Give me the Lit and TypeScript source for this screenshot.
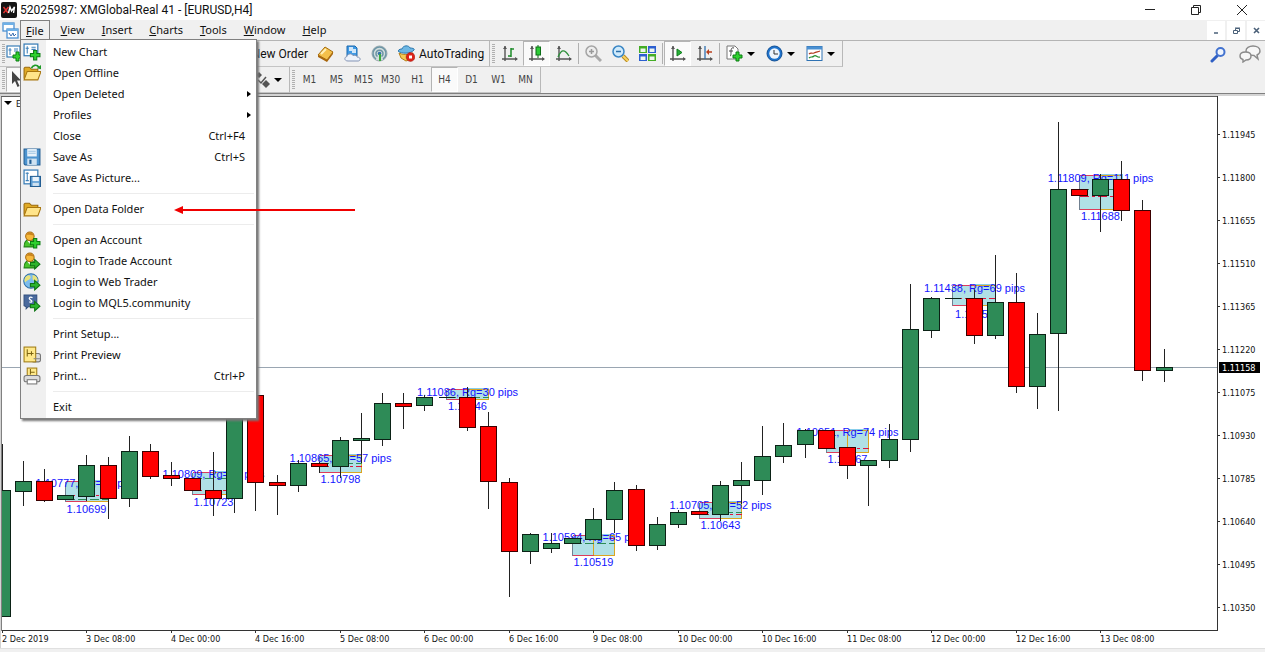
import { LitElement, html, svg, css, nothing, TemplateResult } from "lit";
import { customElement } from "lit/decorators.js";
import { classMap } from "lit/directives/class-map.js";

const plus = (x: number, y: number) => svg`<path transform="translate(${x} ${y})" d="M3 0h3v3h3v3h-3v3h-3v-3h-3v-3h3z" fill="#2fd02f" stroke="#0b7d12" stroke-width="1"/>`;
const arrow = (x: number, y: number) => svg`<path transform="translate(${x} ${y})" d="M0 3h4v-3l5 4.500-5 4.500v-3h-4z" fill="#2cb52c" stroke="#0f7414" stroke-width="1"/>`;
const axes = svg`<path d="M4 1v15M1 14h15" stroke="#555" stroke-width="1.400" fill="none"/><path d="M2 4l2-3 2 3zM14 12l3 2-3 2z" fill="#555"/>`;
const person = svg`<path d="M1 15c0-5 2-7 5.500-7s5.500 2 5.500 7z" fill="#49c52d" stroke="#24821a"/><path d="M4 9l2.500 3 2.500-3z" fill="#fff"/><circle cx="6.500" cy="5" r="4" fill="#f6b93c" stroke="#a76b12"/><path d="M3 4c1-3 6-3 7 0-2 0-5-1-7 0z" fill="#c9821c"/>`;
const folder = svg`<path d="M1 14V4l1-1h4l2 2h6v3" fill="#e0aa25" stroke="#9a6a0c"/><path d="M1 15l3-8h13l-3 8z" fill="#ffe48a" stroke="#a8760f"/>`;
const chartSheet = svg`<rect x="1" y="1" width="13" height="11" fill="#fff" stroke="#3b7fb8" stroke-width="1.200"/><path d="M4 3v7M2.500 5h3M8 4h4M8 6h4" stroke="#3b7fb8"/>`;

const art: Record<string, TemplateResult> = {
  newChart: svg`${chartSheet}${plus(7, 7)}`,
  offline: svg`${folder}<path d="M8 4c1-3 5-4 7-1" fill="none" stroke="#1e9a26" stroke-width="1.600"/><path d="M13 4l4 1V1z" fill="#1e9a26"/>`,
  folder,
  save: svg`<path d="M1 1h15v15H2l-1-1z" fill="#4d94cf" stroke="#235e93"/><rect x="4" y="1" width="9" height="7" fill="#e9f3fb"/><path d="M5 3h7M5 5h7" stroke="#9cc3e2"/><rect x="4" y="10" width="9" height="6" fill="#cfe2f1"/><rect x="6" y="11" width="2" height="4" fill="#235e93"/>`,
  savePic: svg`<rect x="1" y="1" width="13" height="13" fill="#fff" stroke="#3b7fb8" stroke-width="1.200"/><path d="M4 3v8M2.500 4h3M2.500 11h3" stroke="#3b7fb8"/><rect x="7" y="7" width="9.500" height="9.500" fill="#5a9bd2" stroke="#235e93"/><rect x="9" y="7.500" width="6" height="4" fill="#e9f3fb"/><rect x="9" y="13" width="6" height="3" fill="#cfe2f1"/>`,
  account: svg`${person}${plus(7, 7)}`,
  trade: svg`${person}${arrow(7, 7)}`,
  web: svg`<circle cx="7.500" cy="7.500" r="6.800" fill="#7cbcee" stroke="#2b6ea8"/><path d="M3 3c3-2 5 0 4 2s-4 2-5 4c-1-2-1-4 1-6zM9 2c3 0 5 3 5 5l-3 1-2-2z" fill="#e8e27c"/>${arrow(7, 7)}`,
  mql: svg`<path d="M1 1h12v9l-2 2H5l-2 2v-2l-2-1z" fill="#4a6a9e" stroke="#33507f"/><path d="M9 3.500c-3-1.500-4 1-2 2s2 3-1 2" fill="none" stroke="#fff" stroke-width="1.200"/>${arrow(7, 7)}`,
  preview: svg`<rect x="8" y="7" width="8.500" height="8" rx="2" fill="#ddd" stroke="#777"/><rect x="1" y="1" width="11" height="14" fill="#ffe98a" stroke="#a07c14"/><path d="M4 3v7M4 7h6M8 5v4" stroke="#7d6410"/><path d="M10 12h6" stroke="#888"/>`,
  print: svg`<rect x="4" y="1" width="9" height="9" fill="#ffe98a" stroke="#a07c14"/><path d="M7 2v5M7 5h4" stroke="#7d6410"/><rect x="1" y="8" width="15" height="6" rx="2" fill="#dcdcdc" stroke="#777"/><rect x="4" y="12" width="9" height="4" fill="#fff" stroke="#777"/>`,
  book: svg`<path d="M1 10l7-8 8 5-6 8z" fill="#f4c04a" stroke="#a56c0b"/><path d="M1 10v2l9 5 6-8v-2l-6 8z" fill="#a8660c"/><path d="M4 9l5-5" stroke="#fff0b8" stroke-width="2"/>`,
  cloud: svg`<path d="M3 1h8l2 2v8H3z" fill="#3f9be6" stroke="#1c69ad"/><path d="M5 3h4M5 5h7M8 7h4" stroke="#fff" stroke-width="1.400"/><path d="M4 16c-4 0-4-4-1-4.500 0-3 5-3.500 6-1 3-1 4 .5 4 1.500 4 0 4 4 1 4z" fill="#edf2fa" stroke="#8394b5"/>`,
  signal: svg`<circle cx="8.500" cy="8.500" r="7.500" fill="#d3dedd" stroke="#9aa9ae"/><path d="M5 14a6.500 6.500 0 1 1 7 0M6.500 11.500a3.500 3.500 0 1 1 4 0" fill="none" stroke="#6b94a5" stroke-width="1.500"/><circle cx="8.500" cy="8.500" r="1.800" fill="#3472a6"/><path d="M8 9h2v7h-2z" fill="#3bab3f"/>`,
  auto: svg`<path d="M1 8c3 2 10 2 14 0l-2 6-5 2-5-3z" fill="#f5ca54" stroke="#b58017"/><path d="M0 6c1-2 3-2 4-2 1-4 7-4 8-1 3 0 5 1 4 2-3 4-13 4-16 1z" fill="#6db7e4" stroke="#2d79ae"/><circle cx="12.500" cy="12" r="4.400" fill="#dd2318" stroke="#9c120b" stroke-width="0.500"/><rect x="11" y="10.500" width="3" height="3" fill="#fff"/>`,
  bars: svg`${axes}<path d="M10 3v9M10 4h3M7 11h3" stroke="#1c8a28" stroke-width="1.500"/>`,
  candles: svg`${axes}<path d="M10 0v13" stroke="#0d6f17"/><rect x="8" y="2" width="4.500" height="8" fill="#2ccb36" stroke="#0d6f17"/>`,
  line: svg`${axes}<path d="M3 12c3-7 6-9 11-1" fill="none" stroke="#2d8f3a" stroke-width="1.300"/>`,
  zoomIn: svg`<path d="M10 10l6 6" stroke="#aaa" stroke-width="3"/><circle cx="6.500" cy="6.500" r="5.500" fill="#eee" stroke="#a5a5a5" stroke-width="1.500"/><path d="M4 6.500h5M6.500 4v5" stroke="#999" stroke-width="1.500"/>`,
  zoomOut: svg`<path d="M11 11l5 5" stroke="#b98a1d" stroke-width="4"/><path d="M11 11l5 5" stroke="#f6d262" stroke-width="2"/><circle cx="6.500" cy="6.500" r="5.500" fill="#cfeafb" stroke="#3a86c4" stroke-width="1.500"/><path d="M4 6.500h5" stroke="#2b6ea8" stroke-width="1.500"/>`,
  tile: svg`<path d="M0 1h8v7H0zM9 9h8v7H9z" fill="#44ad25"/><path d="M9 1h8v7H9zM0 9h8v7H0z" fill="#2c5fd0"/><path d="M1.500 3.500h5v3.500h-5zM10.500 3.500h5v3.500h-5zM1.500 11.500h5v3.500h-5zM10.500 11.500h5v3.500h-5z" fill="#eef6ee"/>`,
  scroll: svg`${axes}<path d="M8 4v7l5-3.500z" fill="#27b036" stroke="#0f7f1c"/>`,
  shift: svg`${axes}<path d="M9 1v13" stroke="#2f6fae" stroke-width="1.300"/><path d="M16 7h-5" stroke="#b8401e" stroke-width="1.500"/><path d="M13 4l-3 3 3 3z" fill="#b8401e"/>`,
  indicator: svg`<path d="M1 1h8l3 3v10H1z" fill="#fff" stroke="#777"/><path d="M8 3c-3-1-3 2-3 4s0 4-1 4M3 6h4" fill="none" stroke="#444"/>${plus(7, 7)}`,
  clock: svg`<circle cx="8.500" cy="8.500" r="7.500" fill="#1e73cd" stroke="#114f94"/><circle cx="8.500" cy="8.500" r="5.200" fill="#eef5fc"/><path d="M8 5v4h4" fill="none" stroke="#333"/>`,
  template: svg`<rect x="1" y="1.500" width="15" height="14" fill="#fff" stroke="#2f72b3"/><path d="M1 3h15" stroke="#4a90d2" stroke-width="3"/><path d="M3 9c2-2 3 0 5-1s3-1 6-2" fill="none" stroke="#b23a1e" stroke-width="1.200"/><path d="M3 13c2-2 3 0 5-2s3 2 6 1" fill="none" stroke="#238c2e" stroke-width="1.200"/>`,
  cursor: svg`<path d="M5 0v13l3-3 2.500 6 2-1-2.500-5.500h4z" fill="#444"/>`,
  shapes: svg`<path d="M6 1l3 3-3 3-3-3zM13 9l4 4-4 4-4-4z" fill="#555"/><path d="M5 9l3 3 5-6" fill="none" stroke="#555" stroke-width="1.500"/>`,
  mdi: svg`<rect x="1" y="1" width="11" height="8" fill="#fff" stroke="#4a90d2" stroke-width="1.300"/><path d="M1 2h11" stroke="#6fb0e6" stroke-width="2"/><rect x="5" y="7" width="11" height="9" fill="#fff" stroke="#4a90d2" stroke-width="1.300"/><path d="M5 8h11" stroke="#6fb0e6" stroke-width="2"/><path d="M7 11l2 3 2-3 1 3 2-2" fill="none" stroke="#3c6fb0"/>`,
  find: svg`<path d="M7 10l-5 5" stroke="#2f5fc4" stroke-width="3" stroke-linecap="round"/><circle cx="10.500" cy="6" r="4" fill="#eef4fd" stroke="#4272cf" stroke-width="2"/>`,
};

const icon = (name: string, size = 17) =>
  html`<svg class="icon" width=${size} height=${size} viewBox="0 0 17 17" aria-hidden="true">${art[name]}</svg>`;

type MenuItem = { label: string; icon?: string; keys?: string; sub?: boolean } | null;
const fileMenu: MenuItem[] = [
  { label: "New Chart", icon: "newChart" },
  { label: "Open Offline", icon: "offline" },
  { label: "Open Deleted", sub: true },
  { label: "Profiles", sub: true },
  { label: "Close", keys: "Ctrl+F4" },
  { label: "Save As", icon: "save", keys: "Ctrl+S" },
  { label: "Save As Picture...", icon: "savePic" },
  null,
  { label: "Open Data Folder", icon: "folder" },
  null,
  { label: "Open an Account", icon: "account" },
  { label: "Login to Trade Account", icon: "trade" },
  { label: "Login to Web Trader", icon: "web" },
  { label: "Login to MQL5.community", icon: "mql" },
  null,
  { label: "Print Setup..." },
  { label: "Print Preview", icon: "preview" },
  { label: "Print...", icon: "print", keys: "Ctrl+P" },
  null,
  { label: "Exit" },
];

/* Each candle: high, body top, body bottom, low, rising (1) or falling (0). */
const candles: number[][] = [
  [444, 490, 616, 616, 1], [461, 481, 491, 505, 1], [469, 481, 500, 501, 0], [495, 495, 499, 499, 1],
  [455, 465, 496, 500, 1], [457, 465, 498, 518, 0], [436, 451, 498, 506, 1], [444, 451, 476, 478, 0],
  [462, 475, 478, 485, 0], [478, 478, 490, 490, 0], [452, 490, 498, 515, 0], [390, 400, 498, 512, 1],
  [390, 395, 482, 510, 0], [475, 482, 485, 514, 0], [460, 463, 485, 491, 1], [462, 463, 466, 472, 0],
  [437, 440, 466, 477, 1], [413, 438, 440, 462, 1], [393, 403, 439, 445, 1], [393, 403, 406, 428, 0],
  [395, 397, 405, 410, 1], [397, 397, 397, 397, 1], [387, 397, 427, 430, 0], [412, 426, 481, 508, 0],
  [478, 482, 551, 596, 0], [533, 534, 551, 563, 1], [533, 543, 548, 552, 1], [538, 538, 543, 543, 1],
  [508, 519, 539, 539, 1], [482, 490, 519, 532, 1], [485, 489, 545, 550, 0], [517, 524, 545, 549, 1],
  [510, 512, 524, 527, 1], [511, 511, 514, 514, 0], [481, 485, 514, 520, 1], [462, 480, 485, 503, 1],
  [426, 456, 480, 494, 1], [423, 445, 456, 462, 1], [429, 430, 444, 457, 1], [430, 430, 448, 448, 0],
  [447, 447, 465, 478, 0], [460, 460, 465, 505, 1], [424, 439, 460, 467, 1], [284, 329, 439, 451, 1],
  [297, 298, 330, 337, 1], [298, 298, 298, 298, 1], [290, 298, 335, 343, 0], [255, 302, 335, 338, 1],
  [273, 302, 386, 392, 0], [313, 334, 386, 408, 1], [122, 189, 333, 410, 1], [189, 189, 195, 195, 0],
  [174, 179, 195, 231, 1], [161, 179, 210, 220, 0], [200, 210, 370, 380, 0], [349, 367, 370, 381, 1],
];
const barX = (i: number) => Math.round(2 + i * 21.12);

/* Daily range boxes: first bar, top, bottom, green dash, red dash, labels with their baselines. */
const ranges: [number, number, number, number, number, string, number, string, number][] = [
  [3, 481, 501, 499, 495, "1.10777, Rg=68 pips", 487, "1.10699", 513],
  [9, 472, 494, 478, 490, "1.10809, Rg=76 pips", 478, "1.10723", 506],
  [15, 455, 472, 463, 466, "1.10865, Rg=57 pips", 462, "1.10798", 483],
  [21, 389, 399, 397, 0, "1.11086, Rg=30 pips", 396, "1.11046", 410],
  [27, 535, 555, 543, 538, "1.10594, Rg=65 pips", 541, "1.10519", 566],
  [33, 502, 518, 512, 514, "1.10705, Rg=52 pips", 509, "1.10643", 529],
  [39, 430, 452, 0, 448, "1.10951, Rg=74 pips", 436, "1.10867", 463],
  [45, 285, 305, 0, 298, "1.11438, Rg=69 pips", 292, "1.11359", 318],
  [51, 175, 209, 189, 196, "1.11809, Rg=111 pips", 182, "1.11688", 220],
];

const prices = ["1.11945", "1.11800", "1.11655", "1.11510", "1.11365", "1.11220", "1.11075", "1.10930", "1.10785", "1.10640", "1.10495", "1.10350"];
const times = ["2 Dec 2019", "3 Dec 08:00", "4 Dec 00:00", "4 Dec 16:00", "5 Dec 08:00", "6 Dec 00:00", "6 Dec 16:00", "9 Dec 08:00", "10 Dec 00:00", "10 Dec 16:00", "11 Dec 08:00", "12 Dec 00:00", "12 Dec 16:00", "13 Dec 08:00"];

@customElement("price-chart")
class PriceChart extends LitElement {
  static styles = css`
    :host { display: block; }
    svg { display: block; width: 100%; height: auto; font-family: "DejaVu Sans Condensed", "Noto Sans", sans-serif; }
    .axis { font-size: 9px; fill: #111; }
    .now { font-size: 9px; fill: #fff; }
    .range { font: 11px "Liberation Sans", Arial, sans-serif; fill: #1414ff; text-anchor: middle; }
    .crisp { shape-rendering: crispEdges; }
  `;
  private range(r: (typeof ranges)[number]) {
    const [i, top, bottom, green, red, upper, upperY, lower, lowerY] = r;
    const x1 = barX(i) + 0.5, xm = barX(i + 1) + 0.5, x2 = barX(i + 2) + 0.5;
    const t = top + 0.5, b = bottom + 0.5;
    return svg`
      <g class="crisp" fill="none">
        <rect x=${x1} y=${t} width=${x2 - x1} height=${b - t} fill="#b0e0e6"/>
        <path d="M${xm} ${t - 1}H${x2}" stroke="#87ceeb"/>
        <path d="M${xm} ${t}H${x2}V${b}H${xm}z" stroke="#daa520"/>
        <path d="M${x1} ${t}H${xm}M${x1} ${b}H${xm}" stroke="#dc3c5a"/>
        <path d="M${x1} ${t}V${b}" stroke="#708090"/>
        ${green ? svg`<path d="M${x1} ${green + 0.5}H${x2}" stroke="#2e8b57" stroke-dasharray="9 3"/>` : nothing}
        ${red ? svg`<path d="M${x1} ${red + 0.5}H${x2}" stroke="#dc143c" stroke-dasharray="9 3 3 3"/>` : nothing}
      </g>
      <text class="range" x=${xm} y=${upperY}>${upper}</text>
      <text class="range" x=${xm} y=${lowerY}>${lower}</text>`;
  }
  private candle(c: number[], i: number) {
    const [high, top, bottom, low, up] = c;
    const x = barX(i) + 0.5;
    return svg`<path d="M${x} ${high}V${low + 1}" stroke="#222"/>
      <path d="M${x - 8} ${top + 0.5}h16v${bottom - top}h-16z" fill=${up ? "#2e8b57" : "#ff0000"} stroke=${up ? "#0b2216" : "#3a0000"}/>`;
  }
  render() {
    return html`<svg viewBox="0 93 1265 555" role="img" aria-label="EURUSD, H4 candlestick chart">
      <rect x="0" y="93" width="1265" height="555" fill="#fff"/>
      <g class="crisp">
        <rect x="0" y="93" width="1265" height="1" fill="#808080"/>
        <rect x="0" y="94" width="1265" height="2" fill="#d4d4d4"/>
        <rect x="0" y="94" width="1" height="554" fill="#d4d4d4"/>
        <rect x="1" y="96" width="1" height="535" fill="#808080"/>
        <rect x="1" y="96" width="1217" height="1" fill="#606060"/>
        <path d="M2 367.500H1217" stroke="#9aa6b2"/>
      </g>
      <clipPath id="plot"><rect x="2" y="97" width="1215" height="533"/></clipPath>
      <g clip-path="url(#plot)">
        ${ranges.map((r) => this.range(r))}
        <g class="crisp">${candles.map((c, i) => this.candle(c, i))}</g>
      </g>
      <path class="crisp" d="M1217.500 96V630.500M2 630.500H1218" stroke="#333" fill="none"/>
      <path d="M4 101h8l-4 4z" fill="#000"/>
      <text class="axis" x="16" y="107">EURUSD,H4</text>
      ${prices.map((p, i) => svg`<path class="crisp" d="M1218 ${134.5 + i * 43}h2" stroke="#333"/><text class="axis" x="1222" y=${138 + i * 43}>${p}</text>`)}
      ${times.map((t, i) => svg`<path class="crisp" d="M${barX(i * 4) + 0.5} 631v2" stroke="#333"/><text class="axis" x=${barX(i * 4)} y="642">${t}</text>`)}
      <rect x="1219" y="362" width="41" height="11" fill="#000"/>
      <text class="now" x="1222" y="371">1.11158</text>
    </svg>`;
  }
}

@customElement("app-root")
class AppRoot extends LitElement {
  static styles = css`
    :host { display: flex; flex-direction: column; min-height: 100vh; position: relative; background: #f0f0f0; color: #111; font: 11px/20px "Noto Sans", "Open Sans", sans-serif; }
    * { box-sizing: border-box; }
    button { border: 0; padding: 0; margin: 0; background: none; color: inherit; font: inherit; display: flex; align-items: center; white-space: nowrap; }
    .icon { display: block; flex: none; }
    .titlebar { display: flex; align-items: center; height: 20px; background: #fff; }
    .logo { margin: 0 3px 0 1px; }
    h1 { margin: 0; flex: 1; font: 12px/20px Roboto, "Noto Sans", sans-serif; white-space: nowrap; }
    .wctl { width: 46px; height: 20px; justify-content: center; }
    .menubar { display: flex; height: 21px; border-bottom: 1px solid #b4b4b4; padding-left: 2px; align-items: center; }
    .menus { display: flex; flex: 1; margin-left: 1px; gap: 5px; }
    .slot { position: relative; }
    .top { height: 20px; padding: 0 6px; }
    .top.open { border: 1px solid #808080; border-bottom: 0; padding: 0 5px; }
    .key { text-decoration: underline; }
    .mctls { display: flex; gap: 2px; }
    .mctl { width: 18px; height: 19px; background: #fff; justify-content: center; }
    .dropdown { position: absolute; z-index: 2; left: 0; top: 19px; width: 237px; padding: 1px 0; border: 1px solid #808080; background: linear-gradient(90deg, #f0f0f0 25px, #fff 25px); box-shadow: 2px 2px 2px #777; }
    .item { width: 100%; height: 21px; padding: 0 11px 0 0; }
    .gutter { width: 32px; padding-left: 2px; flex: none; }
    .label { flex: 1; text-align: left; }
    .sub { border: 3px solid transparent; border-left: 4px solid #000; border-right: 0; margin-right: -6px; }
    .sep { height: 10px; margin: 0 2px 0 32px; border: 0; background: linear-gradient(#ececec, #ececec) 0 5px / 100% 1px no-repeat; }
    .pointer { position: absolute; z-index: 3; left: 174px; top: 205px; }
    .bar { display: flex; height: 26px; align-items: stretch; }
    .group { display: flex; border-right: 1px solid #b8b8b8; border-bottom: 1px solid #c4c4c4; padding-right: 1px; }
    .grip { width: 3px; margin: 3px 1px 3px 2px; flex: none; background: repeating-linear-gradient(#b0b0b0 0 1px, #f0f0f0 1px 2px); }
    .left { width: 312px; justify-content: space-between; display: flex; padding-right: 4px; }
    .left.short { width: 288px; padding-right: 0; }
    .start { display: flex; }
    .tool { width: 27px; justify-content: center; }
    .on { background: #fafafa; border: 1px solid #b4b4b4; border-right-color: #fff; border-bottom-color: #fff; }
    .auto { padding: 0 4px 0 5px; gap: 4px; }
    .word { font: 12px/20px Roboto, "Noto Sans", sans-serif; }
    .div { width: 1px; margin: 2px 1px; background: #b0b0b0; }
    .drop { width: 40px; padding-left: 5px; gap: 4px; }
    .caret { border: 4px solid transparent; border-top: 4px solid #000; border-bottom: 0; }
    .tf { font: 10px/20px "DejaVu Sans Condensed", "Noto Sans", sans-serif; color: #444; }
    .spacer { flex: 1; }
    .side { display: flex; align-items: center; gap: 12px; padding-right: 4px; }
    .status { flex: 1; min-height: 4px; border-top: 1px solid #e0e0e0; }
  `;
  private tool(name: string, label: string, on = false) {
    return html`<button class=${classMap({ tool: true, on })} aria-label=${label}>${icon(name)}</button>`;
  }
  private drop(name: string, label: string) {
    return html`<button class="drop" aria-label=${label}>${icon(name)}<span class="caret"></span></button>`;
  }
  private menuItem(m: MenuItem) {
    if (!m) return html`<hr class="sep" />`;
    return html`<button class="item" role="menuitem">
      <span class="gutter">${m.icon ? icon(m.icon, 18) : nothing}</span>
      <span class="label">${m.label}</span>
      ${m.keys ? html`<span>${m.keys}</span>` : nothing}
      ${m.sub ? html`<span class="sub"></span>` : nothing}
    </button>`;
  }
  render() {
    return html`
      <header class="titlebar">
        <svg class="logo" width="16" height="16" viewBox="0 0 16 16" aria-hidden="true"><rect width="16" height="16" rx="2" fill="#151515"/><path d="M2.500 5l4.500 6M7.500 5l-5 6" stroke="#e03030" stroke-width="1.500"/><path d="M7.500 11l1.500-6 1.500 4 3-4-1 6" fill="none" stroke="#fff" stroke-width="1.400"/></svg>
        <h1>52025987: XMGlobal-Real 41 - [EURUSD,H4]</h1>
        <button class="wctl" aria-label="Minimize"><svg width="12" height="12"><path d="M1 5.500h10" stroke="#222"/></svg></button>
        <button class="wctl" aria-label="Restore"><svg width="12" height="12" fill="none" stroke="#222"><path d="M1.500 3.500h7v7h-7zM3.500 3v-1.500h7v7h-1.500"/></svg></button>
        <button class="wctl" aria-label="Close"><svg width="12" height="12"><path d="M1 1l10 10M11 1L1 11" stroke="#222"/></svg></button>
      </header>
      <nav class="menubar">
        ${icon("mdi")}
        <div class="menus">
          ${["File", "View", "Insert", "Charts", "Tools", "Window", "Help"].map((n, i) => html`
            <div class="slot">
              <button class=${classMap({ top: true, open: i === 0 })}><span><span class="key">${n[0]}</span>${n.slice(1)}</span></button>
              ${i === 0 ? html`<div class="dropdown" role="menu">${fileMenu.map((m) => this.menuItem(m))}</div>` : nothing}
            </div>`)}
        </div>
        <div class="mctls">
          <button class="mctl" aria-label="Minimize chart"><svg width="9" height="9"><path d="M2 7h4" stroke="#4a6078" stroke-width="1.500"/></svg></button>
          <button class="mctl" aria-label="Restore chart"><svg width="9" height="9" fill="none" stroke="#4a6078"><path d="M1.500 4.500h4v3h-4zM3.500 4V2.500h4v3h-2M3 2h5"/></svg></button>
          <button class="mctl" aria-label="Close chart"><svg width="9" height="9"><path d="M2 2l5 5M7 2L2 7" stroke="#4a6078" stroke-width="1.600"/></svg></button>
        </div>
      </nav>
      <div class="bar">
        <div class="group">
          <div class="left">
            <div class="start"><span class="grip"></span><button aria-label="New chart">${icon("newChart")}</button></div>
            <button class="word">New Order</button>
          </div>
          ${this.tool("book", "MetaEditor")}${this.tool("cloud", "Hosting")}${this.tool("signal", "Signals")}
          <button class="auto word">${icon("auto")}<span>AutoTrading</span></button>
        </div>
        <div class="group">
          <span class="grip"></span>
          ${this.tool("bars", "Bar chart")}${this.tool("candles", "Candlesticks", true)}${this.tool("line", "Line chart")}
          <span class="div"></span>
          ${this.tool("zoomIn", "Zoom in")}${this.tool("zoomOut", "Zoom out")}${this.tool("tile", "Tile windows")}
          <span class="div"></span>
          ${this.tool("scroll", "Auto scroll", true)}${this.tool("shift", "Chart shift")}
          <span class="div"></span>
          ${this.drop("indicator", "Indicators")}${this.drop("clock", "Periods")}${this.drop("template", "Templates")}
        </div>
        <div class="spacer"></div>
        <div class="side">
          <button aria-label="Search">${icon("find")}</button>
          <button aria-label="Chat"><svg width="22" height="18" viewBox="0 0 22 18" fill="#f6f6f6" stroke="#8a8a8a" stroke-width="1.400"><path d="M14 1c4 0 7 2 7 5 0 2-1 3-3 4l1 4-4-3.500c-5 0-8-2-8-4.500 0-3 3-5 7-5z"/><path d="M6.500 7c3 0 5.500 1.500 5.500 4s-2 4-5 4l-3 2v-2.500c-2-.5-3-2-3-3.500 0-2.500 2.500-4 5.500-4z"/></svg></button>
        </div>
      </div>
      <div class="bar">
        <div class="group">
          <div class="left short">
            <div class="start"><span class="grip"></span><button class="on" aria-label="Cursor">${icon("cursor")}</button></div>
            <button class="drop" aria-label="Arrows">${icon("shapes")}<span class="caret"></span></button>
          </div>
        </div>
        <div class="group">
          <span class="grip"></span>
          ${["M1", "M5", "M15", "M30", "H1", "H4", "D1", "W1", "MN"].map((t) => html`<button class=${classMap({ tool: true, tf: true, on: t === "H4" })}>${t}</button>`)}
        </div>
      </div>
      <price-chart></price-chart>
      <footer class="status"></footer>
      <svg class="pointer" width="182" height="10" aria-hidden="true"><path d="M8 5h173" stroke="#f00000" stroke-width="2"/><path d="M0 5l9-4v8z" fill="#f00000"/></svg>
    `;
  }
}
